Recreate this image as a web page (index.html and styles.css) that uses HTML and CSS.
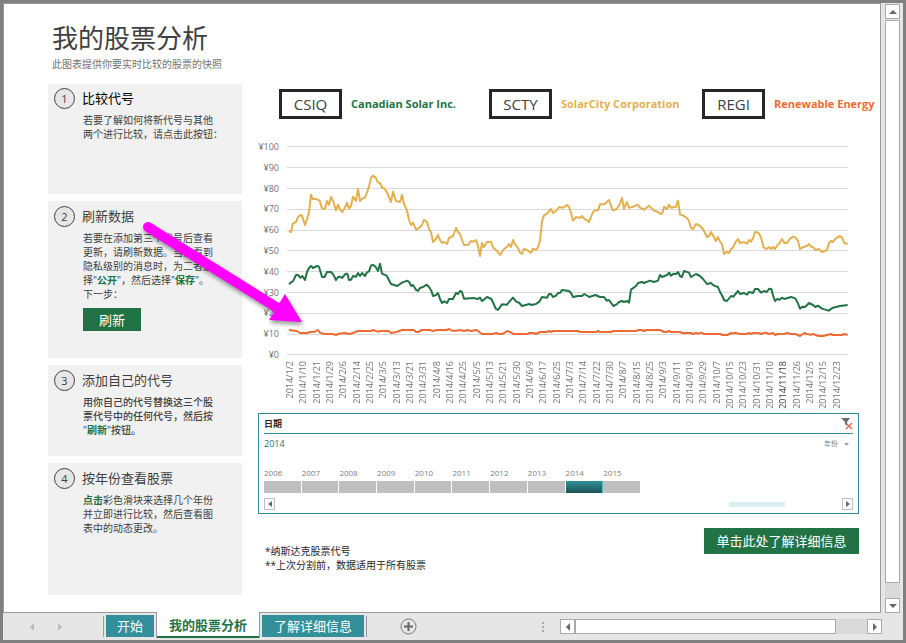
FILE: index.html
```html
<!DOCTYPE html>
<html lang="zh-CN">
<head>
    <meta charset="UTF-8">
    <meta name="viewport" content="width=device-width, initial-scale=1.0">
    <title>我的股票分析</title>
    <link rel="stylesheet" href="styles.css">
</head>
<body>
<div class="workspace">
  <main class="sheet">
    <header class="sheet-header">
      <h1>我的股票分析</h1>
      <p>此图表提供你要实时比较的股票的快照</p>
    </header>

    <div class="columns">
      <div class="steps">
        <section class="card card-compare">
          <h2><span class="num">1</span>比较代号</h2>
          <p>若要了解如何将新代号与其他<br>两个进行比较，请点击此按钮：</p>
        </section>
        <section class="card card-refresh">
          <h2><span class="num">2</span>刷新数据</h2>
          <p>若要在添加第三个代号后查看<br>更新，请刷新数据。当你看到<br>隐私级别的消息时，为二者选<br>择"<b>公开</b>"，然后选择"<b>保存</b>"。<br>下一步：</p>
          <button class="refresh">刷新</button>
        </section>
        <section class="card card-add">
          <h2><span class="num">3</span>添加自己的代号</h2>
          <p class="strong">用你自己的代号替换这三个股<br>票代号中的任何代号，然后按<br>"<b>刷新</b>"按钮。</p>
        </section>
        <section class="card card-year">
          <h2><span class="num">4</span>按年份查看股票</h2>
          <p><b>点击</b>彩色滑块来选择几个年份<br>并立即进行比较，然后查看图<br>表中的动态更改。</p>
        </section>
      </div>

      <div class="report">
        <div class="legend">
          <div class="legend-item green"><span class="symbol">CSIQ</span>Canadian Solar Inc.</div>
          <div class="legend-item yellow"><span class="symbol">SCTY</span>SolarCity Corporation</div>
          <div class="legend-item orange"><span class="symbol">REGI</span>Renewable Energy</div>
        </div>

        <div class="chart">
          <div class="y-axis">
            <span>¥100</span><span>¥90</span><span>¥80</span><span>¥70</span><span>¥60</span><span>¥50</span><span>¥40</span><span>¥30</span><span>¥20</span><span>¥10</span><span>¥0</span>
          </div>
          <svg class="plot" viewBox="111 -72 1683 627" preserveAspectRatio="none">
            <path class="grid-lines" d="M111 -71H1794M111 -8H1794M111 55H1794M111 118H1794M111 181H1794M111 241H1794M111 304H1794M111 367H1794M111 430H1794M111 493H1794M111 553H1794"/>
            <polyline class="line scty" points="117,183 123,186 129,160 138,156 144,142 151,135 156,137 165,165 171,147 177,128 183,74 188,87 198,87 209,92 216,115 225,117 231,93 237,104 243,81 249,92 258,121 264,104 270,118 277,126 284,115 291,98 297,116 303,108 309,80 318,93 324,56 330,93 336,86 345,83 351,68 357,49 363,24 369,17 377,23 384,37 390,39 397,54 403,55 411,67 423,96 429,65 438,93 450,96 456,74 462,102 471,121 477,150 483,165 489,158 499,180 507,174 516,165 522,149 531,156 537,177 543,186 549,216 558,207 564,195 570,210 576,219 583,216 591,222 597,204
              609,198 618,174 624,186 630,192 636,210 642,225 655,224 663,213 670,215 678,210 684,228 690,258 696,219 702,231 711,216 723,216 730,234 741,243 750,255 762,237 771,231 777,222 783,231 789,210 796,224 804,234 810,248 816,252 822,237 831,240 843,249 849,236 858,240 864,231 870,213 876,154 882,136 891,131 903,117 909,129 918,123 927,111 939,113 951,105 957,111 963,128 969,152 978,141 990,144 996,138 1003,147 1011,150 1017,156 1029,126 1036,121 1044,121 1050,103 1063,103 1077,90 1083,108 1089,121 1100,117 1108,105 1116,84 1122,117 1130,96 1137,113 1150,110 1163,104 1170,113 1182,119 1197,107
              1212,122 1224,126 1232,132 1237,130 1242,110 1251,117 1257,104 1263,113 1278,110 1284,92 1290,133 1299,136 1311,144 1317,153 1323,174 1329,177 1338,162 1350,168 1359,177 1371,201 1377,198 1383,186 1390,198 1398,213 1404,201 1410,215 1416,222 1422,252 1430,246 1437,249 1443,237 1449,233 1457,216 1464,207 1470,219 1482,216 1491,221 1497,210 1503,215 1509,204 1515,186 1525,188 1533,202 1541,233 1550,237 1557,231 1563,237 1569,231 1575,237 1582,226 1589,219 1596,207 1603,219 1611,219 1620,206 1630,200 1636,202 1644,213 1650,237 1660,231 1670,228 1677,222 1683,230 1689,231 1696,240 1706,237 1716,246 1731,240 1737,219 1743,213 1749,216 1757,205 1770,198 1777,204 1783,219 1793,222"/>
            <polyline class="line csiq" points="117,343 124,337 130,332 138,315 144,315 151,323 157,318 165,330 171,306 177,294 183,288 189,294 201,288 207,290 216,321 224,321 231,306 243,306 250,314 258,330 264,321 270,320 276,324 287,311 292,311 297,330 303,329 309,318 318,320 324,309 330,318 336,309 345,318 351,307 357,304 363,287 369,284 377,291 384,303 390,281 396,311 410,317 423,342 442,348 456,338 472,332 478,337 484,348 489,345 498,359 504,363 510,354 519,351 530,344 537,351 544,362 549,378 558,375 564,369 570,387 576,399 583,394 591,399 597,387
              609,387 618,369 624,372 630,363 636,366 642,386 670,384 684,387 690,383 696,393 703,388 711,381 724,387 730,399 737,416 744,420 756,403 771,404 777,396 789,383 798,394 808,399 816,408 838,402 844,405 858,402 868,395 876,381 891,383 897,372 903,372 909,381 918,377 924,369 930,369 936,360 957,363 963,369 969,381 984,378 996,378 1003,372 1018,381 1036,375 1050,381 1062,381 1070,392 1077,390 1090,408 1100,403 1107,396 1116,393 1122,396 1131,393 1137,398 1143,359 1158,348 1164,339 1176,336 1182,339 1200,332
              1212,336 1224,332 1230,315 1236,321 1251,315 1257,308 1263,317 1270,311 1278,312 1284,306 1290,318 1296,321 1302,303 1317,308 1323,321 1338,312 1350,318 1359,327 1371,342 1383,339 1392,347 1404,351 1410,366 1417,378 1422,390 1431,393 1443,378 1450,380 1464,363 1470,372 1482,369 1491,374 1497,366 1509,369 1515,357 1524,357 1533,368 1542,363 1550,366 1558,356 1564,357 1569,376 1575,393 1582,387 1589,389 1596,383 1603,387 1623,381 1636,385 1644,401 1650,416 1658,410 1665,411 1677,399 1689,405 1696,411 1704,407 1716,416 1736,422 1749,413 1770,408 1793,405"/>
            <polyline class="line regi" points="117,480 140,483 150,489 171,489 180,486 195,485 204,480 210,488 222,492 248,492 258,495 264,492 284,489 300,492 324,483 363,483 369,480 384,485 392,483 416,483 423,489 440,486 456,480 492,480 498,486 505,486 516,480 540,480 548,483 560,480 590,480 597,477 606,482 618,482 630,480
              642,483 653,480 663,483 680,480 696,492 728,492 738,489 746,492 760,491 771,483 783,487 790,492 832,492 838,489 850,489 858,492 870,486 890,486 897,483 903,486 910,483 984,483 990,486 1038,486 1044,483 1050,486 1084,486 1090,483 1158,483 1165,480 1176,480 1182,483 1190,480
              1230,480 1242,486 1250,486 1257,483 1263,486 1290,486 1297,489 1323,489 1329,492 1338,489 1344,491 1353,488 1362,492 1410,492 1418,495 1432,495 1443,489 1449,491 1455,488 1470,492 1490,492 1497,489 1503,492 1509,489 1525,489 1533,492 1544,488 1550,489 1558,492 1569,489 1575,495 1584,492 1604,491 1611,489 1624,492 1636,492 1650,498 1663,489 1670,492 1683,494 1689,492 1705,498 1720,498 1743,492 1749,495 1775,495 1783,492 1793,495"/>
          </svg>
          <div class="x-axis">
            <span>2014/1/2</span><span>2014/1/10</span><span>2014/1/21</span><span>2014/1/29</span><span>2014/2/6</span><span>2014/2/14</span><span>2014/2/25</span>
            <span>2014/3/5</span><span>2014/3/13</span><span>2014/3/21</span><span>2014/3/31</span><span>2014/4/8</span><span>2014/4/16</span><span>2014/4/25</span>
            <span>2014/5/5</span><span>2014/5/13</span><span>2014/5/21</span><span>2014/5/30</span><span>2014/6/9</span><span>2014/6/17</span><span>2014/6/25</span>
            <span>2014/7/3</span><span>2014/7/14</span><span>2014/7/22</span><span>2014/7/30</span><span>2014/8/7</span><span>2014/8/15</span><span>2014/8/25</span>
            <span>2014/9/3</span><span>2014/9/11</span><span>2014/9/19</span><span>2014/9/29</span><span>2014/10/7</span><span>2014/10/15</span><span>2014/10/23</span>
            <span>2014/10/31</span><span>2014/11/10</span><span class="dark">2014/11/18</span><span>2014/11/26</span><span>2014/12/5</span><span>2014/12/15</span><span>2014/12/23</span>
          </div>
        </div>

        <section class="timeline">
          <div class="timeline-head">
            <h3>日期</h3>
            <button class="clear" aria-label="清除筛选器">
              <svg width="12" height="12" viewBox="0 0 12 12">
                <path d="M0 0H9L6 4V8L4 6V4Z" fill="#6a6a6a"/>
                <path d="M5 5L11 11M11 5L5 11" stroke="#e2674a" stroke-width="1.4"/>
              </svg>
            </button>
          </div>
          <div class="timeline-sub">
            <span class="period">2014</span>
            <label class="level">
              <select aria-label="时间级别"><option>年份</option></select>
              <svg width="5" height="3" viewBox="0 0 5 3"><path d="M0 0H5L2.500 3Z" fill="#a0a0a0"/></svg>
            </label>
          </div>
          <div class="years">
            <span>2006</span><span>2007</span><span>2008</span><span>2009</span><span>2010</span><span>2011</span><span>2012</span><span>2013</span><span class="selected">2014</span><span>2015</span>
          </div>
          <div class="timeline-scroll">
            <button aria-label="向左"><svg width="4" height="6" viewBox="0 0 4 6"><path d="M4 0V6L0 3Z"/></svg></button>
            <div class="track"><div class="thumb"></div></div>
            <button aria-label="向右"><svg width="4" height="6" viewBox="0 0 4 6"><path d="M0 0V6L4 3Z"/></svg></button>
          </div>
        </section>

        <div class="bottom">
          <p class="notes">*纳斯达克股票代号<br>**上次分割前，数据适用于所有股票</p>
          <button class="learn">单击此处了解详细信息</button>
        </div>
      </div>
    </div>

    <svg class="arrow" width="170" height="116" viewBox="0 0 170 116">
      <path d="M6 9L134 89" stroke="#f0f" stroke-width="10" stroke-linecap="round"/>
      <path d="M143 76L160 104L127 102Z" fill="#f0f"/>
    </svg>
  </main>

  <div class="v-scroll">
    <button aria-label="向上"><svg width="8" height="4" viewBox="0 0 8 4"><path d="M0 4H8L4 0Z"/></svg></button>
    <div class="v-thumb"></div>
    <div class="v-rest"></div>
    <button aria-label="向下"><svg width="8" height="4" viewBox="0 0 8 4"><path d="M0 0H8L4 4Z"/></svg></button>
  </div>
</div>

<footer class="tab-bar">
  <div class="tab-nav">
    <button aria-label="上一个"><svg width="4" height="8" viewBox="0 0 4 8"><path d="M4 0V8L0 4Z"/></svg></button>
    <button aria-label="下一个"><svg width="4" height="8" viewBox="0 0 4 8"><path d="M0 0V8L4 4Z"/></svg></button>
  </div>
  <nav class="tabs">
    <button class="tab">开始</button>
    <button class="tab active">我的股票分析</button>
    <button class="tab">了解详细信息</button>
  </nav>
  <button class="add" aria-label="新工作表">
    <svg width="17" height="17" viewBox="0 0 17 17">
      <circle cx="8.500" cy="8.500" r="7.500" fill="none" stroke="#777"/>
      <path d="M4 8.500H13M8.500 4V13" stroke="#666" stroke-width="2"/>
    </svg>
  </button>
  <svg class="dots" width="2" height="10" viewBox="0 0 2 10"><path d="M0 0H2V2H0ZM0 4H2V6H0ZM0 8H2V10H0Z" fill="#aaa"/></svg>
  <div class="h-scroll">
    <button aria-label="向左"><svg width="4" height="8" viewBox="0 0 4 8"><path d="M4 0V8L0 4Z"/></svg></button>
    <div class="h-thumb"></div>
    <div class="h-rest"></div>
    <button aria-label="向右"><svg width="4" height="8" viewBox="0 0 4 8"><path d="M0 0V8L4 4Z"/></svg></button>
  </div>
</footer>
</body>
</html>
```

FILE: styles.css
```css
* {
  box-sizing: border-box;
}

body {
  margin: 0;
  min-height: 100vh;
  display: flex;
  flex-direction: column;
  border: 3px solid #808080;
  background: #e6e6e6;
  color: #404040;
  font-family: "Open Sans", "Noto Sans CJK SC", sans-serif;
  font-size: 10px;
  line-height: 14px;
}

h1, h2, h3, p {
  margin: 0;
  font-weight: normal;
}

button, select {
  margin: 0;
  padding: 0;
  border: 0;
  background: none;
  color: inherit;
  font: inherit;
}

svg {
  display: block;
}

.workspace {
  flex: 1;
  display: flex;
}

/* worksheet */
.sheet {
  position: relative;
  flex: 1;
  min-width: 0;
  padding: 16px 21px 16px 44px;
  border: 1px solid #999;
  background: #fff;
}

.sheet-header {
  padding-left: 4px;
  margin-bottom: 13px;
}

.sheet-header h1 {
  font-size: 26px;
  line-height: 36px;
}

.sheet-header p {
  margin-top: 1px;
  color: #737373;
}

.columns {
  display: grid;
  grid-template-columns: 194px 1fr;
  gap: 16px;
}

/* left side cards */
.steps {
  display: flex;
  flex-direction: column;
  gap: 7px;
}

.card {
  padding: 4px 6px;
  background: #f1f1f1;
}

.card-compare { min-height: 110px; padding-top: 3px; }
.card-refresh { min-height: 157px; }
.card-add { min-height: 91px; }
.card-year { min-height: 132px; }

.card h2 {
  display: flex;
  align-items: center;
  gap: 7px;
  margin-bottom: 4px;
  font-size: 13px;
  line-height: 22px;
}

.card-compare h2 {
  color: #000;
}

.num {
  width: 21px;
  height: 21px;
  border: 1px solid #404040;
  border-radius: 50%;
  background: #e6e6e6;
  color: #404040;
  font-size: 11px;
  line-height: 19px;
  text-align: center;
}

.card p {
  padding-left: 29px;
  white-space: nowrap;
}

.card b {
  color: #217346;
}

.card .strong {
  font-weight: 500;
}

.refresh {
  margin: 7px 0 0 29px;
  width: 58px;
  height: 23px;
  background: #217346;
  color: #fff;
  font-size: 13px;
}

/* legend */
.legend {
  display: grid;
  grid-template-columns: minmax(0, 210fr) minmax(0, 213fr) minmax(0, 157fr);
  padding: 5px 0 0 21px;
  margin-bottom: 27px;
}

.legend-item {
  display: flex;
  align-items: center;
  gap: 9px;
  font-size: 11px;
  font-weight: bold;
  white-space: nowrap;
}

.symbol {
  flex: none;
  width: 63px;
  height: 30px;
  border: 3px solid #262626;
  color: #404040;
  font-size: 15px;
  font-weight: normal;
  line-height: 24px;
  text-align: center;
}

.green { color: #217346; }
.yellow { color: #e3b04f; }
.orange { color: #ed6b32; }

/* chart */
.chart {
  display: grid;
  grid-template-columns: 21px 1fr;
  column-gap: 8px;
  padding-right: 11px;
  color: #737373;
  font-size: 9px;
  line-height: 11px;
}

.y-axis {
  display: flex;
  flex-direction: column;
  justify-content: space-between;
  margin: -5px 0;
  text-align: right;
}

.plot {
  width: 100%;
  height: 209px;
  overflow: visible;
}

.grid-lines {
  stroke: #d9d9d9;
  vector-effect: non-scaling-stroke;
  shape-rendering: crispEdges;
}

.line {
  fill: none;
  stroke-width: 2px;
  stroke-linejoin: round;
  vector-effect: non-scaling-stroke;
}

.scty { stroke: #e3b04f; }
.csiq { stroke: #217346; }
.regi { stroke: #ed6b32; }

.x-axis {
  grid-column: 2;
  display: grid;
  grid-template-columns: repeat(42, 1fr);
  justify-items: center;
  align-items: start;
  height: 52px;
  margin: 6px 5px 0 -4px;
}

.x-axis span {
  writing-mode: vertical-rl;
  transform: rotate(180deg);
  white-space: nowrap;
}

.x-axis .dark {
  color: #404040;
}

/* date timeline */
.timeline {
  padding: 0 5px 3px;
  border: 1px solid #2f8f98;
}

.timeline-head {
  display: flex;
  justify-content: space-between;
  align-items: center;
  height: 20px;
  border-bottom: 1px solid #2f8f98;
}

.timeline-head h3 {
  color: #262626;
  font-size: 9px;
  font-weight: bold;
}

.timeline-sub {
  display: flex;
  justify-content: space-between;
  align-items: center;
  height: 20px;
  font-size: 9px;
}

.period {
  color: #1f7078;
}

.level {
  display: flex;
  align-items: center;
  gap: 6px;
  padding-right: 4px;
  color: #808080;
}

.level select {
  appearance: none;
  font-size: 7px;
}

.years {
  display: grid;
  grid-template-columns: repeat(10, 1fr);
  width: 64%;
  margin-top: 12px;
  color: #808080;
  font-size: 8px;
}

.years span::after {
  content: "";
  display: block;
  height: 12px;
  margin-top: 1px;
  border-right: 1px solid #fff;
  background: #bfbfbf;
}

.years .selected::after {
  border-color: #5fb9c1;
  background: linear-gradient(#32919a, #1b5158);
}

.timeline-scroll {
  display: flex;
  align-items: center;
  margin-top: 5px;
}

.timeline-scroll button {
  display: grid;
  place-items: center;
  width: 11px;
  height: 12px;
  border: 1px solid #bfbfbf;
}

.timeline-scroll path {
  fill: #666;
}

.track {
  flex: 1;
}

.thumb {
  width: 10%;
  height: 5px;
  margin-left: 82%;
  background: #daeef3;
}

.bottom {
  display: flex;
  justify-content: space-between;
  align-items: flex-start;
  padding-top: 14px;
}

.thumb {
  margin-left: 80%;
}

.notes {
  padding: 16px 0 0 7px;
  color: #262626;
}

.learn {
  width: 155px;
  height: 26px;
  background: #217346;
  color: #fff;
  font-size: 13px;
}

/* pointer over the sheet */
.arrow {
  position: absolute;
  left: 138px;
  top: 214px;
  filter: drop-shadow(1px 3px 2px rgba(0, 0, 0, .4));
  pointer-events: none;
}

/* scroll bars */
.v-scroll {
  display: flex;
  flex-direction: column;
  width: 22px;
  padding: 1px 3px 0 4px;
}

.v-scroll button, .h-scroll button {
  display: grid;
  place-items: center;
  width: 15px;
  height: 15px;
  border: 1px solid #aaa;
  background: #fff;
}

.v-scroll path, .h-scroll path {
  fill: #666;
}

.v-thumb {
  flex: 1;
  margin-top: 1px;
  border: 1px solid #aaa;
  background: #fff;
}

.v-rest {
  height: 15px;
  background: #dadada;
}

/* sheet tabs */
.tab-bar {
  display: flex;
  align-items: center;
  height: 27px;
  padding-right: 21px;
}

.tab-nav {
  display: flex;
  gap: 24px;
  width: 101px;
  height: 21px;
  padding-left: 27px;
  border-right: 1px solid #999;
}

.tab-nav path {
  fill: #bbb;
}

.tabs {
  display: flex;
  align-self: stretch;
  gap: 2px;
  padding: 0 2px;
  font-size: 13px;
}

.tab {
  min-width: 48px;
  height: 22px;
  margin-top: 2px;
  padding: 0 11px;
  background: #338f99;
  color: #fff;
}

.tab:last-child {
  padding: 0 12px;
}

.tab.active {
  position: relative;
  height: 26px;
  margin-top: -1px;
  border: 1px solid #999;
  border-width: 0 1px;
  padding: 0 12px;
  background: linear-gradient(#217346, #217346) bottom / 100% 2px no-repeat #fff;
  color: #217346;
  font-weight: bold;
}

.add {
  display: flex;
  align-items: center;
  height: 21px;
  padding-left: 33px;
  border-left: 1px solid #999;
}

.dots {
  margin-left: auto;
  margin-right: 16px;
}

.h-scroll {
  display: flex;
  flex: 0 1 322px;
}

.h-thumb {
  flex: 1;
  border: 1px solid #aaa;
  background: #fff;
}

.h-rest {
  width: 31px;
  background: #dadada;
}
```
